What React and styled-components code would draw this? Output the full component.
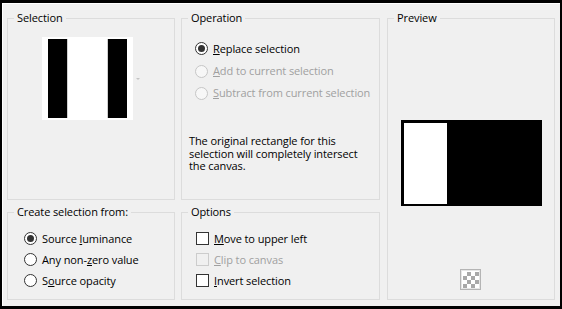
import React from "react";
import styled, { createGlobalStyle } from "styled-components";

const Global = createGlobalStyle`
  html, body { margin: 0; padding: 0; background: #f0f0f0; }
  body { font-family: "Open Sans", "Noto Sans", sans-serif; font-size: 11px; color: #000; letter-spacing: -0.1px; }
  * { box-sizing: border-box; }
`;

const Window = styled.div`
  width: 562px;
  height: 309px;
  background: #f0f0f0;
  border-style: solid;
  border-color: #000;
  border-width: 3px 2px 3px 2px;
  box-shadow: inset 1px 1px 0 #fff;
  padding: 8px 0 0 5px;
`;

const Layout = styled.div`
  display: grid;
  grid-template-columns: 168px 199px 169px;
  grid-template-rows: 189px 95px;
  column-gap: 6px;
  row-gap: 5px;
`;

const Group = styled.fieldset`
  margin: 0;
  margin-left: ${(p) => p.$shift || 0}px;
  padding: 0;
  min-width: 0;
  border: 1px solid #dcdcdc;
  grid-row: ${(p) => p.$rows || "auto"};
  grid-column: ${(p) => p.$col || "auto"};
`;

const Legend = styled.legend`
  margin-left: 6px;
  padding: 0 3px;
  font-size: 11px;
  line-height: 14px;
  color: #000;
`;

const Body = styled.div`
  display: flex;
  flex-direction: column;
  align-items: ${(p) => (p.$center ? "center" : "stretch")};
  padding: ${(p) => p.$pad || "0"};
`;

const ThumbRow = styled.div`
  display: flex;
  align-items: center;
  gap: 3px;
  padding-left: 34px;
  margin-top: 12px;
`;

const DropArrow = styled.span`
  width: 0;
  height: 0;
  border-left: 2px solid transparent;
  border-right: 2px solid transparent;
  border-top: 2px solid #c4c4c4;
`;

const Option = styled.label`
  display: flex;
  align-items: center;
  height: ${(p) => p.$h || 21}px;
  padding-left: ${(p) => p.$indent || 13}px;
  gap: 5px;
  white-space: nowrap;
  line-height: 14px;
  color: ${(p) => (p.$disabled ? "#a0a0a0" : "#000")};
`;

const Radio = styled.span`
  position: relative;
  flex: none;
  width: 13px;
  height: 13px;
  border-radius: 50%;
  border: 1px solid ${(p) => (p.$disabled ? "#c6c6c6" : "#333")};
  background: ${(p) => (p.$disabled ? "#f7f7f7" : "#fff")};
  &::after {
    content: "";
    display: ${(p) => (p.$checked ? "block" : "none")};
    position: absolute;
    left: 2px;
    top: 2px;
    width: 7px;
    height: 7px;
    border-radius: 50%;
    background: #333;
  }
`;

const Check = styled.span`
  flex: none;
  width: 13px;
  height: 13px;
  border: 1px solid ${(p) => (p.$disabled ? "#cccccc" : "#333")};
  background: ${(p) => (p.$disabled ? "#f0f0f0" : "#fff")};
`;

const Note = styled.p`
  margin: 31px 0 0 7px;
  width: 182px;
  line-height: 12.5px;
`;

const PreviewPic = styled.div`
  margin-top: 95px;
  display: flex;
`;

const Checker = styled.div`
  margin-top: 63px;
  margin-left: -2px;
  display: flex;
`;

function Thumb() {
  return (
    <svg width="91" height="83" viewBox="0 0 91 83">
      <rect width="91" height="83" fill="#fff" />
      <rect x="6" y="2" width="19" height="79" fill="#000" />
      <rect x="66" y="2" width="19" height="79" fill="#000" />
      <rect x="25" y="2" width="1" height="79" fill="#888" opacity="0.4" />
      <rect x="65" y="2" width="1" height="79" fill="#888" opacity="0.4" />
    </svg>
  );
}

function Preview() {
  return (
    <svg width="141" height="86" viewBox="0 0 141 86">
      <rect width="141" height="86" fill="#000" />
      <rect x="3" y="3" width="43" height="81" fill="#fff" />
    </svg>
  );
}

function CheckerIcon() {
  const cells = [];
  for (let r = 0; r < 4; r++) {
    for (let c = 0; c < 4; c++) {
      cells.push(
        <rect
          key={r + "-" + c}
          x={3 + c * 4}
          y={3 + r * 4}
          width="4"
          height="4"
          fill={(r + c) % 2 === 0 ? "#ffffff" : "#a8a8a8"}
        />
      );
    }
  }
  return (
    <svg width="21" height="21" viewBox="0 0 21 21">
      <rect x="0.5" y="0.5" width="20" height="20" fill="#e6e6e6" stroke="#b4b4b4" />
      <rect x="2" y="2" width="17" height="17" fill="#fff" />
      {cells}
    </svg>
  );
}

export default function App() {
  return (
    <>
      <Global />
      <Window>
        <Layout>
          <Group $col="1" $rows="1">
            <Legend>Selection</Legend>
            <ThumbRow>
              <Thumb />
              <DropArrow />
            </ThumbRow>
          </Group>

          <Group $col="2" $rows="1">
            <Legend>Operation</Legend>
            <Body $pad="12px 0 0 0">
              <Option $h={23}>
                <Radio $checked />
                <span><u>R</u>eplace selection</span>
              </Option>
              <Option $h={22} $disabled>
                <Radio $disabled />
                <span><u>A</u>dd to current selection</span>
              </Option>
              <Option $h={22} $disabled>
                <Radio $disabled />
                <span><u>S</u>ubtract from current selection</span>
              </Option>
              <Note>
                The original rectangle for this selection will completely intersect the canvas.
              </Note>
            </Body>
          </Group>

          <Group $col="3" $rows="1 / span 2" $shift={1}>
            <Legend>Preview</Legend>
            <Body $center>
              <PreviewPic>
                <Preview />
              </PreviewPic>
              <Checker>
                <CheckerIcon />
              </Checker>
            </Body>
          </Group>

          <Group $col="1" $rows="2">
            <Legend>Create selection from:</Legend>
            <Body $pad="9px 0 0 0">
              <Option $indent={16}>
                <Radio $checked />
                <span>Source <u>l</u>uminance</span>
              </Option>
              <Option $indent={16}>
                <Radio />
                <span>Any non-<u>z</u>ero value</span>
              </Option>
              <Option $indent={16}>
                <Radio />
                <span>S<u>o</u>urce opacity</span>
              </Option>
            </Body>
          </Group>

          <Group $col="2" $rows="2">
            <Legend>Options</Legend>
            <Body $pad="9px 0 0 0">
              <Option $indent={14}>
                <Check />
                <span><u>M</u>ove to upper left</span>
              </Option>
              <Option $indent={14} $disabled>
                <Check $disabled />
                <span><u>C</u>lip to canvas</span>
              </Option>
              <Option $indent={14}>
                <Check />
                <span><u>I</u>nvert selection</span>
              </Option>
            </Body>
          </Group>
        </Layout>
      </Window>
    </>
  );
}
